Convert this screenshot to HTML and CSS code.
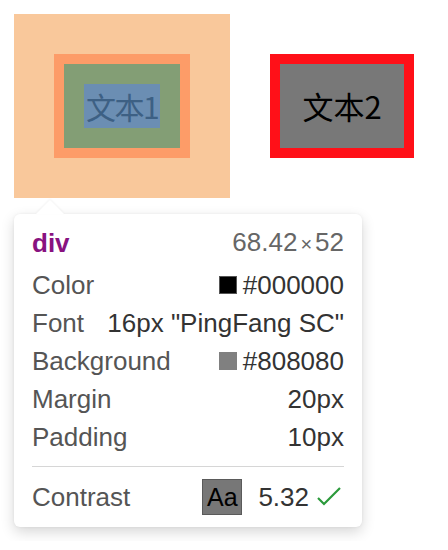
FILE: index.html
```html
<!DOCTYPE html>
<html>
<head>
<meta charset="utf-8">
<link rel="stylesheet" href="styles.css">
</head>
<body>
<div class="page">
  <div class="stage">
    <div class="m-box">
      <div class="b-box">
        <div class="p-box">
          <div class="c-box">文本1</div>
        </div>
      </div>
    </div>
    <div class="box2">文本2</div>
  </div>
  <div class="tip">
    <div class="row head">
      <span class="tag">div</span>
      <span class="dims">68.42<span class="times">×</span>52</span>
    </div>
    <div class="row">
      <span class="label">Color</span>
      <span class="value"><span class="swatch black"></span>#000000</span>
    </div>
    <div class="row">
      <span class="label">Font</span>
      <span class="value">16px "PingFang SC"</span>
    </div>
    <div class="row">
      <span class="label">Background</span>
      <span class="value"><span class="swatch gray"></span>#808080</span>
    </div>
    <div class="row">
      <span class="label">Margin</span>
      <span class="value">20px</span>
    </div>
    <div class="row">
      <span class="label">Padding</span>
      <span class="value">10px</span>
    </div>
    <div class="sep"></div>
    <div class="row contrast">
      <span class="label">Contrast</span>
      <span class="value">
        <span class="aa">Aa</span>
        <span class="ratio">5.32</span>
        <svg class="check" width="24" height="20" viewBox="0 0 24 20"><polyline points="1,11 7,17 23,1" fill="none" stroke="#2b9a3b" stroke-width="2.2"/></svg>
      </span>
    </div>
  </div>
</div>
</body>
</html>
```
FILE: styles.css
```css
html, body {
  margin: 0;
  padding: 0;
  background: #ffffff;
}
.page {
  padding: 14px;
  font-family: "Liberation Sans", Arial, sans-serif;
}
.stage {
  display: flex;
  align-items: flex-start;
  gap: 40px;
}
.m-box {
  background: #f9c89b;
  padding: 40px;
}
.b-box {
  background: #fd9c68;
  padding: 10px;
}
.p-box {
  background: #839e75;
  padding: 20px;
}
.c-box {
  width: 76px;
  height: 44px;
  background: #6b8eb3;
  color: #3d6084;
  font-family: "Noto Sans CJK SC", sans-serif;
  font-size: 30px;
  letter-spacing: -1.5px;
  line-height: 44px;
  white-space: nowrap;
  display: flex;
  justify-content: center;
}
.box2 {
  margin-top: 40px;
  width: 124px;
  height: 84px;
  border: 10px solid #ff1018;
  background: #787878;
  color: #000000;
  font-family: "Noto Sans CJK SC", sans-serif;
  font-size: 31px;
  line-height: 84px;
  text-align: center;
}
.tip {
  position: relative;
  margin-top: 16px;
  width: 312px;
  padding: 10px 18px 11px;
  background: #ffffff;
  border-radius: 6px;
  box-shadow: 0 5px 14px rgba(0, 0, 0, 0.16), 0 0 3px rgba(0, 0, 0, 0.06);
}
.tip::before {
  content: "";
  position: absolute;
  left: 22px;
  top: -14px;
  width: 0;
  height: 0;
  border-left: 14px solid transparent;
  border-right: 14px solid transparent;
  border-bottom: 14px solid #ffffff;
  filter: drop-shadow(0 -1px 1px rgba(0, 0, 0, 0.05));
}
.row {
  display: flex;
  justify-content: space-between;
  align-items: center;
  height: 38px;
  font-size: 26px;
  line-height: 38px;
  white-space: nowrap;
}
.head {
  margin-bottom: 4px;
}
.tag {
  color: #881280;
  font-weight: bold;
}
.dims {
  color: #666666;
}
.times {
  font-size: 20px;
  margin: 0 3px;
}
.label {
  color: #555555;
}
.value {
  color: #333333;
  display: flex;
  align-items: center;
}
.swatch {
  width: 18px;
  height: 18px;
  margin-right: 6px;
  box-sizing: border-box;
  border: 1px solid #8a8a8a;
}
.swatch.black {
  background: #000000;
  border-color: #555555;
}
.swatch.gray {
  background: #808080;
  border-color: #808080;
}
.sep {
  margin-top: 10px;
  height: 1px;
  background: #d6d6d6;
}
.contrast {
  margin-top: 11px;
}
.aa {
  width: 40px;
  height: 36px;
  box-sizing: border-box;
  border: 1px solid #5a5a5a;
  background: #777777;
  color: #000000;
  font-size: 25px;
  line-height: 34px;
  text-align: center;
  margin-right: 16px;
}
.ratio {
  margin-right: 8px;
}
.check {
  display: block;
  margin-right: 3px;
}
```
